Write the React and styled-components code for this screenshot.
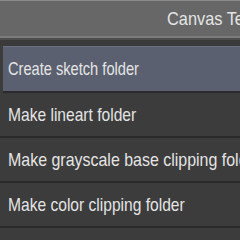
import React from "react";
import styled, { createGlobalStyle } from "styled-components";

const Global = createGlobalStyle`
  html, body { margin: 0; padding: 0; background: #3c3c3c; }
  body { width: 240px; height: 240px; overflow: hidden; font-family: "Liberation Sans", Arial, sans-serif; }
`;

const Panel = styled.div`
  width: 240px;
  height: 240px;
  overflow: hidden;
  display: flex;
  flex-direction: column;
  background: #3c3c3c;
`;

const Header = styled.div`
  height: 35px;
  flex: none;
  background: #676767;
  border-top: 1px solid #8a8a8a;
  border-bottom: 2px solid #7b7b7b;
  display: flex;
  align-items: center;
  padding-left: 167px;
  white-space: nowrap;
  overflow: hidden;
`;

const Label = styled.span`
  display: inline-block;
  font-size: 19px;
  color: #e4e4e4;
  transform: scaleX(${(p) => p.$scale || 0.8});
  transform-origin: left center;
  white-space: nowrap;
`;

const Gap = styled.div`
  height: 8px;
  flex: none;
  background: #3a3a3a;
  border-top: 2px solid #4e4e4e;
  box-sizing: border-box;
`;

const List = styled.div`
  display: flex;
  flex-direction: column;
`;

const Row = styled.div`
  height: ${(p) => (p.$selected ? "47px" : "45px")};
  flex: none;
  box-sizing: border-box;
  display: flex;
  align-items: center;
  white-space: nowrap;
  overflow: hidden;
  background: ${(p) => (p.$selected ? "#5a606f" : "#3c3c3c")};
  margin-left: ${(p) => (p.$selected ? "3px" : "0")};
  padding-left: ${(p) => (p.$selected ? "5px" : "8px")};
  border-top: 1px solid ${(p) => (p.$selected ? "#6a7080" : "transparent")};
  border-bottom: 2px solid #2a2a2a;
`;

const items = [
  { text: "Create sketch folder", scale: 0.77 },
  { text: "Make lineart folder", scale: 0.82 },
  { text: "Make grayscale base clipping folder", scale: 0.84 },
  { text: "Make color clipping folder", scale: 0.82 },
];

export default function App() {
  return (
    <Panel>
      <Global />
      <Header>
        <Label $scale={0.86}>Canvas Templates</Label>
      </Header>
      <Gap />
      <List>
        {items.map((it, i) => (
          <Row key={it.text} $selected={i === 0}>
            <Label $scale={it.scale}>{it.text}</Label>
          </Row>
        ))}
      </List>
    </Panel>
  );
}
